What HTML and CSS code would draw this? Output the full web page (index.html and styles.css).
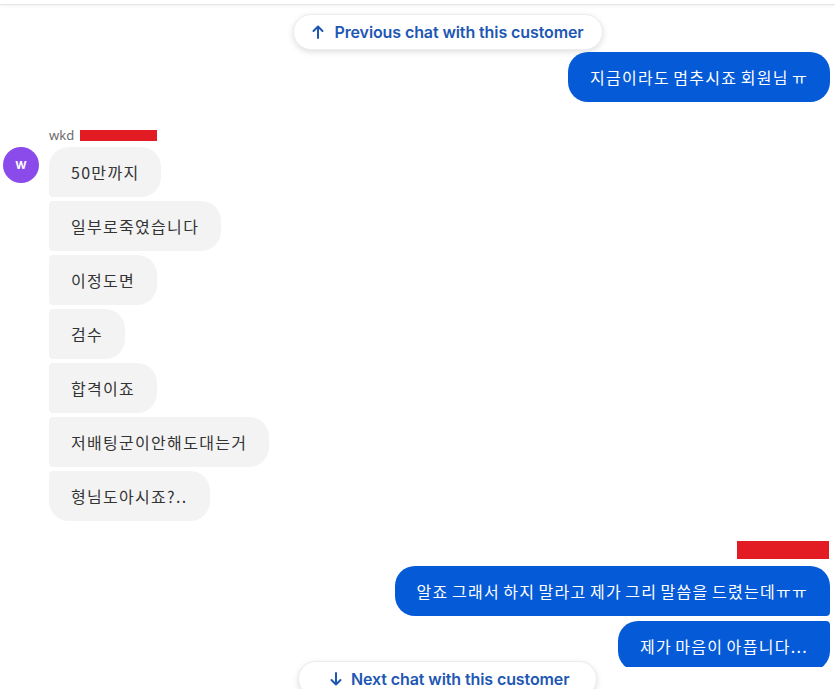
FILE: index.html
```html
<!DOCTYPE html>
<html lang="ko">
<head>
<meta charset="utf-8">
<title>Chat</title>
<link rel="stylesheet" href="styles.css">
</head>
<body>
<div class="app">
  <div class="thread">
    <div class="topbar"></div>
    <div class="nav-row">
      <button class="nav-btn nav-btn--prev">
        <svg class="nav-arrow" width="12" height="14" viewBox="0 0 12 14"><path d="M6 13V1.5M1.5 6L6 1.5 10.5 6" fill="none" stroke="currentColor" stroke-width="2" stroke-linecap="round" stroke-linejoin="round"/></svg>
        <span>Previous chat with this customer</span>
      </button>
    </div>

    <div class="out-group out-group--first">
      <div class="bubble bubble--out bubble--single">지금이라도 멈추시죠 회원님 ㅠ</div>
    </div>

    <div class="in-block">
      <div class="sender"><span class="sender-name">wkd</span><span class="redact redact--name"></span></div>
      <div class="in-row">
        <div class="avatar">W</div>
        <div class="in-group">
          <div class="bubble bubble--in bubble--first">50만까지</div>
          <div class="bubble bubble--in bubble--mid">일부로죽였습니다</div>
          <div class="bubble bubble--in bubble--mid">이정도면</div>
          <div class="bubble bubble--in bubble--mid">검수</div>
          <div class="bubble bubble--in bubble--mid">합격이죠</div>
          <div class="bubble bubble--in bubble--mid">저배팅군이안해도대는거</div>
          <div class="bubble bubble--in bubble--last">형님도아시죠?..</div>
        </div>
      </div>
    </div>

    <div class="out-block">
      <div class="redact redact--agent"></div>
      <div class="out-group">
        <div class="bubble bubble--out bubble--first">알죠 그래서 하지 말라고 제가 그리 말씀을 드렸는데ㅠㅠ</div>
        <div class="bubble bubble--out bubble--last">제가 마음이 아픕니다...</div>
      </div>
    </div>
  </div>

  <button class="nav-btn nav-btn--next">
    <svg class="nav-arrow" width="12" height="14" viewBox="0 0 12 14"><path d="M6 1v11.5M1.5 8L6 12.5 10.5 8" fill="none" stroke="currentColor" stroke-width="2" stroke-linecap="round" stroke-linejoin="round"/></svg>
    <span>Next chat with this customer</span>
  </button>
</div>
</body>
</html>
```

FILE: styles.css
```css
* { box-sizing: border-box; }
html, body { margin: 0; padding: 0; background: #ffffff; }
body { font-family: "Noto Sans CJK KR", "Noto Sans", sans-serif; overflow: hidden; }

.app {
  position: relative;
  width: 835px;
  height: 689px;
  overflow: hidden;
  background: #fff;
}

.thread {
  height: 667px;
  overflow: hidden;
  display: flex;
  flex-direction: column;
}

.topbar {
  height: 5px;
  flex: none;
  border-bottom: 1px solid #e6e6e6;
  box-shadow: 0 1px 4px rgba(0,0,0,0.06);
}

.nav-row {
  display: flex;
  justify-content: center;
  padding-left: 61px;
  margin-top: 9px;
  flex: none;
}

.nav-btn {
  display: inline-flex;
  align-items: center;
  gap: 10px;
  height: 36px;
  border: 1px solid #ececec;
  border-radius: 18px;
  background: #fff;
  box-shadow: 0 2px 6px rgba(0,0,0,0.13);
  color: #1e57b3;
  font-family: Inter, "Noto Sans", sans-serif;
  font-weight: 600;
  font-size: 16px;
  letter-spacing: -0.1px;
  cursor: pointer;
}
.nav-btn--prev { padding: 0 18px 0 18px; }
.nav-btn--next {
  position: absolute;
  top: 661px;
  left: 298px;
  padding: 0 27px 0 31px;
  gap: 9px;
}
.nav-arrow { flex: none; display: block; }

.bubble {
  height: 50px;
  display: flex;
  align-items: center;
  padding: 0 22px;
  font-size: 16px;
  letter-spacing: 1.3px;
  word-spacing: -2.5px;
  white-space: nowrap;
  border-radius: 20px;
}
.bubble--in { background: #f3f3f4; color: #333333; }
.bubble--out { background: #055ad7; color: #ffffff; }

.out-group {
  display: flex;
  flex-direction: column;
  align-items: flex-end;
  gap: 5px;
  padding-right: 5px;
}
.out-group--first { margin-top: 2px; }

.bubble--in.bubble--first { border-bottom-left-radius: 4px; }
.bubble--in.bubble--mid { border-top-left-radius: 4px; border-bottom-left-radius: 4px; }
.bubble--in.bubble--last { border-top-left-radius: 4px; }
.bubble--out.bubble--first { border-bottom-right-radius: 4px; }
.bubble--out.bubble--last { border-top-right-radius: 4px; }

.in-block { margin-top: 24px; }
.sender {
  display: flex;
  align-items: center;
  height: 18px;
  margin-left: 49px;
  margin-bottom: 3px;
}
.sender-name {
  font-family: "Noto Sans", sans-serif;
  font-size: 13px;
  color: #6b6b6b;
  line-height: 18px;
}
.redact { background: #e31b23; }
.redact--name { width: 77px; height: 11px; margin-left: 6px; }

.in-row {
  display: flex;
  align-items: flex-start;
  padding-left: 3px;
  gap: 10px;
}
.avatar {
  width: 36px;
  height: 36px;
  border-radius: 50%;
  background: #8a4bea;
  color: #fff;
  font-family: Inter, "Noto Sans", sans-serif;
  font-weight: 700;
  font-size: 11px;
  display: flex;
  align-items: center;
  justify-content: center;
  flex: none;
}
.in-group {
  display: flex;
  flex-direction: column;
  align-items: flex-start;
  gap: 4px;
}

.out-block {
  margin-top: 20px;
  display: flex;
  flex-direction: column;
  align-items: flex-end;
}
.redact--agent { width: 92px; height: 18px; margin-right: 6px; margin-bottom: 7px; }
```
